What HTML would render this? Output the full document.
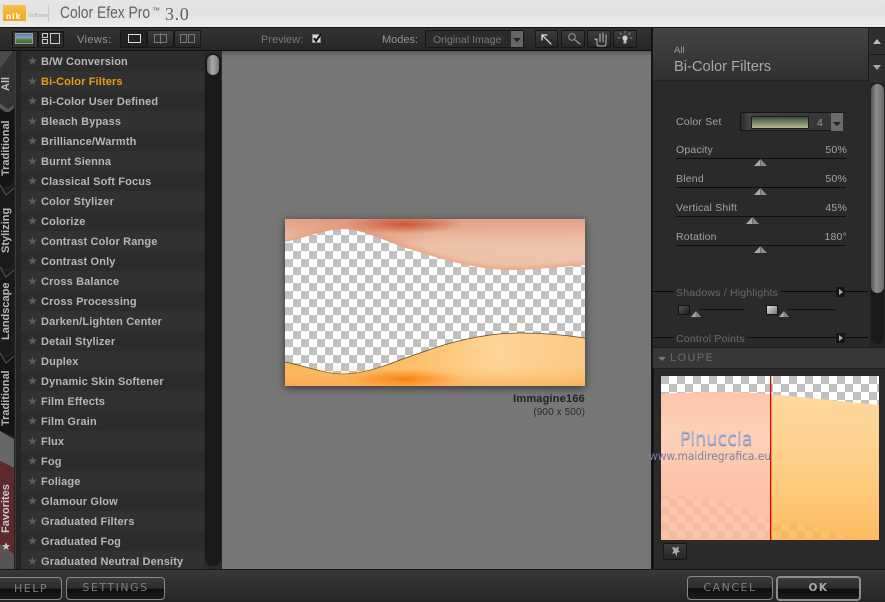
<!DOCTYPE html>
<html><head><meta charset="utf-8"><style>
*{box-sizing:border-box}
html,body{margin:0;padding:0;width:885px;height:602px;overflow:hidden;background:#2a2a2a;font-family:"Liberation Sans",sans-serif}
.a{position:absolute}
.t{position:absolute;white-space:nowrap;line-height:12px}
#list div{position:absolute;left:21px;width:184px;height:20px;font:bold 11px/22px "Liberation Sans",sans-serif;letter-spacing:.14px;color:#b4b6bc;padding-left:20px}
#list div:nth-child(odd){background:#2c2c2c}
#list div:nth-child(even){background:#313131}
#list div::before{content:"★";position:absolute;left:6px;top:0;font:12px/20px "DejaVu Sans",sans-serif;color:#5c5c5c}
.tab{position:absolute;left:0;width:13px;text-align:center;font:bold 11px/13px "Liberation Sans",sans-serif;color:#b8b8b8;white-space:nowrap;writing-mode:vertical-rl;transform:rotate(180deg)}
.lbl{position:absolute;left:676px;font:10.5px/14px "Liberation Sans",sans-serif;letter-spacing:.2px;color:#a2a4a8;white-space:nowrap}
.val{position:absolute;right:38px;font:10.5px/14px "Liberation Sans",sans-serif;letter-spacing:.2px;color:#a2a4a8}
.ln{position:absolute;height:1px;background:#0e0e0e}
.tri{position:absolute;width:13px;height:7px;background:linear-gradient(90deg,#aaa 0,#aaa 46%,#444 50%,#8a8a8a 54%);clip-path:polygon(50% 0,100% 100%,0 100%)}
.btn{position:absolute;background:linear-gradient(#3c3c3c,#262626);border:1px solid #161616;border-radius:2px}
.bb{position:absolute;border:1px solid #8a8a8a;border-radius:4px;background:linear-gradient(#3a3a3a 0,#2c2c2c 50%,#0c0c0c 52%,#1e1e1e 100%);text-align:center;font-family:"DejaVu Sans",sans-serif;color:#7e7e7e;letter-spacing:1.5px}
</style></head><body>

<!-- title bar -->
<div class="a" style="left:0;top:0;width:885px;height:27px;background:linear-gradient(#e6e6e6,#e2e2e2 45%,#ececec)"></div>
<div class="a" style="left:3px;top:5px;width:23px;height:16px;background:linear-gradient(#f7c14a,#f0a51c);"></div>
<div class="t" style="left:6px;top:12px;width:20px;font:bold 7.5px/9px 'DejaVu Sans',sans-serif;color:#fff;letter-spacing:.8px">nik</div>
<div class="t" style="left:28px;top:12px;font:5.5px/8px 'Liberation Sans',sans-serif;color:#aaa">Software</div>
<div class="a" style="left:48px;top:5px;width:1px;height:17px;background:#c8c8c8"></div>
<div class="t" style="left:60px;top:4px;font:16.5px/19px 'Liberation Sans',sans-serif;color:#626262;transform:scaleX(.84);transform-origin:left">Color Efex Pro</div>
<div class="t" style="left:152px;top:6px;font:8px/9px 'Liberation Sans',sans-serif;color:#626262">™</div>
<div class="t" style="left:165px;top:4px;font:18px/20px 'Liberation Serif',serif;color:#626262;letter-spacing:.6px">3.0</div>
<div class="a" style="left:0;top:27px;width:885px;height:1px;background:#111"></div>

<!-- toolbar -->
<div class="a" style="left:0;top:28px;width:652px;height:23px;background:linear-gradient(#333,#272727);border-bottom:1px solid #0f0f0f"></div>
<div class="btn" style="left:12px;top:31px;width:26px;height:17px;background:#343434"></div>
<div class="a" style="left:15px;top:33px;width:18px;height:11px;background:linear-gradient(#5a7fb0 0,#7fa0c0 45%,#5d8a4a 55%,#3d6a30);border:1px solid #999"></div>
<div class="btn" style="left:38px;top:31px;width:26px;height:17px;background:#2a2a2a"></div>
<div class="a" style="left:42px;top:33px;width:6px;height:5px;border:1px solid #ccc"></div>
<div class="a" style="left:42px;top:39px;width:6px;height:5px;border:1px solid #ccc"></div>
<div class="a" style="left:50px;top:33px;width:10px;height:11px;border:1px solid #ccc"></div>
<div class="t" style="left:77px;top:34px;font:11px/12px 'Liberation Sans',sans-serif;letter-spacing:.4px;color:#8f949c">Views:</div>
<div class="btn" style="left:120px;top:30px;width:27px;height:18px;background:#222"></div>
<div class="btn" style="left:147px;top:30px;width:27px;height:18px"></div>
<div class="btn" style="left:174px;top:30px;width:27px;height:18px"></div>
<div class="a" style="left:128px;top:34px;width:13px;height:9px;border:1px solid #ddd"></div>
<div class="a" style="left:154px;top:34px;width:13px;height:9px;border:1px solid #777"></div>
<div class="a" style="left:160px;top:33px;width:1px;height:11px;background:#777"></div>
<div class="a" style="left:180px;top:34px;width:7px;height:9px;border:1px solid #777"></div>
<div class="a" style="left:188px;top:34px;width:7px;height:9px;border:1px solid #777"></div>
<div class="t" style="left:261px;top:34px;font:11px/12px 'Liberation Sans',sans-serif;letter-spacing:0;color:#74787e">Preview:</div>
<div class="a" style="left:312px;top:34px;width:9px;height:9px;background:#d8d8d8;border:1px solid #888"></div>
<svg class="a" style="left:311px;top:32px" width="12" height="12"><path d="M3 6 L5 9 L10 2" fill="none" stroke="#111" stroke-width="2"/></svg>
<div class="t" style="left:382px;top:34px;font:11px/12px 'Liberation Sans',sans-serif;letter-spacing:0;color:#8f949c">Modes:</div>
<div class="btn" style="left:425px;top:30px;width:99px;height:18px;background:#2b2b2b"></div>
<div class="t" style="left:433px;top:34px;font:10.5px/12px 'Liberation Sans',sans-serif;letter-spacing:0;color:#767a80">Original Image</div>
<div class="a" style="left:511px;top:31px;width:12px;height:16px;background:#666"></div>
<div class="a" style="left:513px;top:38px;width:0;height:0;border:4px solid transparent;border-top:4px solid #222"></div>
<div class="btn" style="left:535px;top:30px;width:23px;height:18px"></div>
<div class="btn" style="left:561px;top:30px;width:24px;height:18px"></div>
<div class="btn" style="left:587px;top:30px;width:24px;height:18px"></div>
<div class="btn" style="left:613px;top:30px;width:24px;height:18px"></div>
<svg class="a" style="left:535px;top:30px" width="102" height="18" fill="none" stroke-linecap="round">
<path d="M7 5 L7 10 M7 5 L12 5 M7 5 L16 14" stroke="#e8e8e8" stroke-width="1.2"/>
<circle cx="37" cy="7" r="3.3" stroke="#999" stroke-width="1"/><path d="M40 10 L45 14" stroke="#999" stroke-width="1.2"/>
<path d="M62 9 V14 Q62 16 64 16 H69 Q71 16 71 13 V5 M65 12 V4 M68 12 V3 M71 12 V5 M62 10 L60 9" stroke="#bbb" stroke-width="1"/>
<circle cx="90" cy="8" r="2.6" fill="#ccc"/><rect x="88.500" y="10.500" width="3" height="3" fill="#bbb"/>
<path d="M83 8 H85 M95 8 H97 M85 3 L86.500 4.500 M95 3 L93.500 4.500 M90 1 V3" stroke="#888" stroke-width="1"/>
</svg>

<!-- left tabs -->
<div class="a" style="left:0;top:51px;width:21px;height:519px;background:#232323"></div>
<div class="a" style="left:15px;top:51px;width:1px;height:519px;background:#3a3a3a"></div>
<svg class="a" style="left:0;top:51px" width="15" height="519">
<path d="M0 0 H15 V54 L8 58 L0 52Z" fill="#333"/>
<path d="M0 0 H13 L0 18Z" fill="#4a4a4a"/>
<path d="M0 52 L8 58 L14 54 V58 L8 63 L0 57Z" fill="#555"/>
<path d="M0 57 Q8 66 14 56 V130 Q8 140 0 134Z" fill="#141414"/>
<path d="M0 134 Q8 144 14 132 V212 Q8 222 0 216Z" fill="#1a1a1a"/>
<path d="M0 134 L6 144 L14 137" stroke="#5a5a5a" fill="none"/>
<path d="M0 216 Q8 226 14 214 V298 Q8 308 0 302Z" fill="#1a1a1a"/>
<path d="M0 216 L6 226 L14 219" stroke="#5a5a5a" fill="none"/>
<path d="M0 302 Q8 312 14 300 V385 L0 380Z" fill="#141414"/>
<path d="M0 302 L6 312 L14 305" stroke="#5a5a5a" fill="none"/>
<path d="M0 380 L14 388 V417 L0 410Z" fill="#666"/>
<path d="M0 410 L14 417 V503 L0 493Z" fill="#5e2a2e"/>
<path d="M0 493 L14 503 V519 H0Z" fill="#555"/>
</svg>
<div class="tab" style="top:77px;height:14px;color:#c0c0c0">All</div>
<div class="tab" style="top:122px;height:54px">Traditional</div>
<div class="tab" style="top:209px;height:44px">Stylizing</div>
<div class="tab" style="top:285px;height:55px">Landscape</div>
<div class="tab" style="top:372px;height:54px">Traditional</div>
<div class="tab" style="top:486px;height:47px;color:#cfc8c8">Favorites</div>
<div class="t" style="left:0;top:541px;width:12px;text-align:center;font:11px/12px 'DejaVu Sans',sans-serif;color:#d0c8c8">★</div>

<!-- list -->
<div id="list">
<div style="top:51px">B/W Conversion</div>
<div style="top:71px;color:#f09a10">Bi-Color Filters</div>
<div style="top:91px">Bi-Color User Defined</div>
<div style="top:111px">Bleach Bypass</div>
<div style="top:131px">Brilliance/Warmth</div>
<div style="top:151px">Burnt Sienna</div>
<div style="top:171px">Classical Soft Focus</div>
<div style="top:191px">Color Stylizer</div>
<div style="top:211px">Colorize</div>
<div style="top:231px">Contrast Color Range</div>
<div style="top:251px">Contrast Only</div>
<div style="top:271px">Cross Balance</div>
<div style="top:291px">Cross Processing</div>
<div style="top:311px">Darken/Lighten Center</div>
<div style="top:331px">Detail Stylizer</div>
<div style="top:351px">Duplex</div>
<div style="top:371px">Dynamic Skin Softener</div>
<div style="top:391px">Film Effects</div>
<div style="top:411px">Film Grain</div>
<div style="top:431px">Flux</div>
<div style="top:451px">Fog</div>
<div style="top:471px">Foliage</div>
<div style="top:491px">Glamour Glow</div>
<div style="top:511px">Graduated Filters</div>
<div style="top:531px">Graduated Fog</div>
<div style="top:551px;height:19px">Graduated Neutral Density</div>
</div>

<!-- list scrollbar -->
<div class="a" style="left:204px;top:51px;width:18px;height:519px;background:#2a2a2a"></div>
<div class="a" style="left:205px;top:53px;width:16px;height:513px;background:#1a1a1a;border-radius:7px"></div>
<div class="a" style="left:207px;top:55px;width:12px;height:20px;background:linear-gradient(90deg,#666,#a8a8a8 45%,#777);border-radius:6px"></div>

<!-- preview -->
<div class="a" style="left:222px;top:51px;width:429px;height:519px;background:#777;box-shadow:inset 0 6px 6px -4px #555"></div>
<div class="a" style="left:285px;top:219px;width:300px;height:167px;box-shadow:0 2px 8px rgba(0,0,0,.55)"></div>
<svg class="a" style="left:285px;top:219px" width="300" height="167" viewBox="0 0 300 167">
<defs>
<pattern id="ck" width="16" height="16" patternUnits="userSpaceOnUse" x="0" y="8"><rect width="16" height="16" fill="#fff"/><rect width="8" height="8" fill="#c0c0c0"/><rect x="8" y="8" width="8" height="8" fill="#c0c0c0"/></pattern>
<linearGradient id="tw" x1="0" y1="0" x2="1" y2="0"><stop offset="0" stop-color="#efc3ab"/><stop offset=".25" stop-color="#e6a88e"/><stop offset=".5" stop-color="#eec2a8"/><stop offset="1" stop-color="#efc4ad"/></linearGradient>
<linearGradient id="tv" x1="0" y1="0" x2="0" y2="1"><stop offset="0" stop-color="#d98a6c" stop-opacity=".6"/><stop offset=".5" stop-color="#d98a6c" stop-opacity="0"/></linearGradient>
<radialGradient id="tr" cx=".5" cy=".5" r=".5"><stop offset="0" stop-color="#c85030" stop-opacity=".9"/><stop offset="1" stop-color="#c85030" stop-opacity="0"/></radialGradient>
<linearGradient id="bw" x1="0" y1="0" x2="1" y2="0"><stop offset="0" stop-color="#fbb658"/><stop offset=".4" stop-color="#fbbd68"/><stop offset=".7" stop-color="#fed596"/><stop offset="1" stop-color="#fbc983"/></linearGradient>
<linearGradient id="bv" x1="0" y1="0" x2="0" y2="1"><stop offset=".6" stop-color="#fbc070" stop-opacity="0"/><stop offset="1" stop-color="#fba850" stop-opacity=".7"/></linearGradient>
<radialGradient id="br" cx="0.5" cy="0.5" r=".5"><stop offset="0" stop-color="#fb7f10"/><stop offset="1" stop-color="#fb8f20" stop-opacity="0"/></radialGradient>
<linearGradient id="lp" x1="0" y1="0" x2="0" y2="1"><stop offset="0" stop-color="#fdc6aa"/><stop offset=".3" stop-color="#fdd0b8"/><stop offset=".7" stop-color="#fdc0a6"/><stop offset="1" stop-color="#fbbfa2"/></linearGradient>
<linearGradient id="lo" x1="0" y1="0" x2="0" y2="1"><stop offset="0" stop-color="#fed89e"/><stop offset=".5" stop-color="#fecf86"/><stop offset="1" stop-color="#fdbb60"/></linearGradient>
<filter id="bl" x="-5%" y="-30%" width="110%" height="160%"><feGaussianBlur stdDeviation="2.5"/></filter>
<clipPath id="tc"><path d="M0 23 C20 19 40 10 58 10 C80 10 105 25 128 31 C165 43 195 51 228 51 C250 51 280 47 300 46 V0 H0Z"/></clipPath>
</defs>
<rect width="300" height="167" fill="url(#ck)"/>
<path d="M0 23 C20 19 40 10 58 10 C80 10 105 25 128 31 C165 43 195 51 228 51 C250 51 280 47 300 46 V0 H0Z" fill="url(#tw)"/>
<rect width="300" height="50" fill="url(#tv)" clip-path="url(#tc)"/>
<g clip-path="url(#tc)">
<path d="M0 23 C20 19 40 10 58 10 C80 10 105 25 128 31 C165 43 195 51 228 51 C250 51 280 47 300 46" fill="none" stroke="#e8936c" stroke-width="4" opacity=".75" filter="url(#bl)"/>
<ellipse cx="120" cy="5" rx="60" ry="10" fill="url(#tr)"/>
</g>
<path d="M0 143 C20 147 40 155 58 155 C85 155 110 142 135 134 C165 123 200 114 235 114 C260 114 280 116 300 119 V167 H0Z" fill="url(#bw)"/>
<path d="M0 143 C20 147 40 155 58 155 C85 155 110 142 135 134 C165 123 200 114 235 114 C260 114 280 116 300 119" fill="none" stroke="#6a4420" stroke-width=".7"/>
<rect y="114" width="300" height="53" fill="url(#bv)"/>
<ellipse cx="118" cy="160" rx="62" ry="10" fill="url(#br)"/>
</svg>
<div class="t" style="left:400px;top:393px;width:185px;text-align:right;font:bold 11px/12px 'Liberation Sans',sans-serif;color:#222;letter-spacing:.2px">Immagine166</div>
<div class="t" style="left:400px;top:407px;width:185px;text-align:right;font:10px/12px 'Liberation Sans',sans-serif;color:#2c2c2c;letter-spacing:.1px">(900 x 500)</div>
<div class="a" style="left:651px;top:28px;width:2px;height:542px;background:#141414"></div>

<!-- right panel -->
<div class="a" style="left:653px;top:28px;width:232px;height:542px;background:#2a2a2a"></div>
<div class="a" style="left:653px;top:28px;width:215px;height:53px;background:linear-gradient(#444,#303030);border-bottom:1px solid #222"></div>
<div class="t" style="left:674px;top:45px;font:9.5px/11px 'Liberation Sans',sans-serif;color:#999">All</div>
<div class="t" style="left:674px;top:58px;font:14.7px/18px 'Liberation Sans',sans-serif;color:#a6a8ac">Bi-Color Filters</div>
<div class="a" style="left:868px;top:28px;width:17px;height:54px;background:#2f2f2f;border-left:1px solid #1a1a1a"></div>
<div class="a" style="left:869px;top:54px;width:16px;height:1px;background:#1a1a1a"></div>
<div class="a" style="left:873px;top:39px;width:0;height:0;border:4px solid transparent;border-bottom:5px solid #bbb;border-top:0"></div>
<div class="a" style="left:873px;top:65px;width:0;height:0;border:4px solid transparent;border-top:5px solid #aaa;border-bottom:0"></div>
<div class="a" style="left:870px;top:83px;width:15px;height:264px;background:#242424"></div>
<div class="a" style="left:871px;top:84px;width:13px;height:260px;background:#1a1a1a;border-radius:7px"></div>
<div class="a" style="left:871px;top:84px;width:13px;height:209px;background:linear-gradient(90deg,#555,#8c8c8c 40%,#6a6a6a);border-radius:7px"></div>

<div class="lbl" style="top:115px">Color Set</div>
<div class="btn" style="left:740px;top:112px;width:103px;height:19px;background:linear-gradient(90deg,#2a2a2a,#444 8%,#333)"></div>
<div class="a" style="left:751px;top:116px;width:58px;height:13px;background:linear-gradient(#3c4a42,#6c7a62 40%,#b2b98e);border:1px solid #1c1c1c"></div>
<div class="t" style="left:817px;top:116px;font:10.5px/14px 'Liberation Sans',sans-serif;color:#999">4</div>
<div class="a" style="left:831px;top:113px;width:12px;height:18px;background:#6b6b6b"></div>
<div class="a" style="left:833px;top:122px;width:0;height:0;border:4px solid transparent;border-top:4px solid #222"></div>

<div class="lbl" style="top:143px">Opacity</div><div class="val" style="top:143px">50%</div>
<div class="ln" style="left:676px;top:158px;width:170px"></div><div class="tri" style="left:754px;top:159px"></div>
<div class="lbl" style="top:172px">Blend</div><div class="val" style="top:172px">50%</div>
<div class="ln" style="left:676px;top:187px;width:170px"></div><div class="tri" style="left:754px;top:188px"></div>
<div class="lbl" style="top:201px">Vertical Shift</div><div class="val" style="top:201px">45%</div>
<div class="ln" style="left:676px;top:216px;width:170px"></div><div class="tri" style="left:746px;top:217px"></div>
<div class="lbl" style="top:230px">Rotation</div><div class="val" style="top:230px">180°</div>
<div class="ln" style="left:676px;top:245px;width:170px"></div><div class="tri" style="left:754px;top:246px"></div>

<div class="ln" style="left:653px;top:291px;width:215px"></div>
<div class="t" style="left:674px;top:286px;padding:0 2px;background:#2a2a2a;font:10.5px/14px 'Liberation Sans',sans-serif;letter-spacing:.2px;color:#6a6a6a">Shadows / Highlights</div>
<div class="a" style="left:836px;top:287px;width:9px;height:10px;background:#151515"></div>
<div class="a" style="left:839px;top:289px;width:0;height:0;border:3px solid transparent;border-left:4px solid #aaa;border-right:0"></div>
<div class="a" style="left:678px;top:305px;width:12px;height:10px;background:linear-gradient(135deg,#555,#1c1c1c);border:1px solid #111"></div>
<div class="tri" style="left:691px;top:311px;width:10px;height:6px"></div>
<div class="ln" style="left:700px;top:309px;width:45px"></div>
<div class="a" style="left:766px;top:305px;width:12px;height:10px;background:linear-gradient(135deg,#ddd,#777);border:1px solid #111"></div>
<div class="tri" style="left:779px;top:311px;width:10px;height:6px"></div>
<div class="ln" style="left:788px;top:309px;width:47px"></div>

<div class="ln" style="left:653px;top:337px;width:215px"></div>
<div class="t" style="left:674px;top:332px;padding:0 2px;background:#2a2a2a;font:10.5px/14px 'Liberation Sans',sans-serif;letter-spacing:.2px;color:#6a6a6a">Control Points</div>
<div class="a" style="left:836px;top:333px;width:9px;height:10px;background:#151515"></div>
<div class="a" style="left:839px;top:335px;width:0;height:0;border:3px solid transparent;border-left:4px solid #aaa;border-right:0"></div>

<!-- loupe -->
<div class="a" style="left:653px;top:347px;width:232px;height:22px;background:#373737;border-top:1px solid #1c1c1c;border-bottom:1px solid #1f1f1f"></div>
<div class="a" style="left:658px;top:357px;width:0;height:0;border:4px solid transparent;border-top:4px solid #777;border-bottom:0"></div>
<div class="t" style="left:670px;top:352px;font:11px/13px 'Liberation Sans',sans-serif;letter-spacing:1.4px;color:#6c6c6c">LOUPE</div>
<div class="a" style="left:653px;top:369px;width:1px;height:200px;background:#161616"></div>
<svg class="a" style="left:661px;top:376px" width="218" height="164" viewBox="0 0 218 164">
<defs>
<pattern id="ck2" width="16" height="16" patternUnits="userSpaceOnUse" x="0" y="0"><rect width="16" height="16" fill="#fff"/><rect width="8" height="8" fill="#c0c0c0"/><rect x="8" y="8" width="8" height="8" fill="#c0c0c0"/></pattern>
<pattern id="ck3" width="16" height="16" patternUnits="userSpaceOnUse" x="0" y="3"><rect width="8" height="8" fill="#000" opacity=".025"/><rect x="8" y="8" width="8" height="8" fill="#000" opacity=".025"/><rect x="8" width="8" height="8" fill="#fff" opacity=".08"/><rect y="8" width="8" height="8" fill="#fff" opacity=".08"/></pattern>
</defs>
<rect width="218" height="164" fill="url(#ck2)"/>
<path d="M0 18 Q60 14 109 18 V164 H0Z" fill="url(#lp)"/>
<path d="M109 18 L218 29 V164 H109Z" fill="url(#lo)"/>
<path d="M0 120 Q60 118 109 144 L109 164 H0Z" fill="url(#ck3)"/>
<path d="M109 144 Q140 146 198 164 H109Z" fill="url(#ck3)"/>
<rect x="109" y="0" width="1.300" height="164" fill="#d80000"/>
</svg>
<div class="t" style="left:680px;top:428px;font:19px/22px 'DejaVu Sans',sans-serif;color:#a8b0d4;letter-spacing:.1px;transform:scaleX(.92);transform-origin:left;text-shadow:0 1px 0 #8088a8">Pinuccia</div>
<div class="t" style="left:649px;top:450px;font:11.5px/13px 'DejaVu Sans',sans-serif;color:#7a80a0;transform:scaleX(.925);transform-origin:left">www.maidiregrafica.eu</div>
<div class="btn" style="left:663px;top:543px;width:24px;height:17px"></div>
<svg class="a" style="left:663px;top:543px" width="24" height="17"><path d="M9 4 L13 5 L16 3.500 L15 7 L17 9 L14 9.500 L14 14 L12 10 L9 11 L10.500 8Z" fill="#aaa"/></svg>

<!-- bottom bar -->
<div class="a" style="left:0;top:569px;width:885px;height:33px;background:linear-gradient(#383838,#262626);border-top:1px solid #161616"></div>
<div class="bb" style="left:-5px;top:577px;width:67px;height:23px;font-size:11px;line-height:21px;padding-left:5px">HELP</div>
<div class="bb" style="left:66px;top:577px;width:99px;height:23px;font-size:11px;line-height:20px">SETTINGS</div>
<div class="bb" style="left:687px;top:576px;width:86px;height:24px;font-size:11px;line-height:21px">CANCEL</div>
<div class="bb" style="left:776px;top:576px;width:85px;height:25px;border:2px solid #8e8e8e;font-size:10.5px;font-weight:bold;line-height:21px;color:#a8a8a8">OK</div>
</body></html>
